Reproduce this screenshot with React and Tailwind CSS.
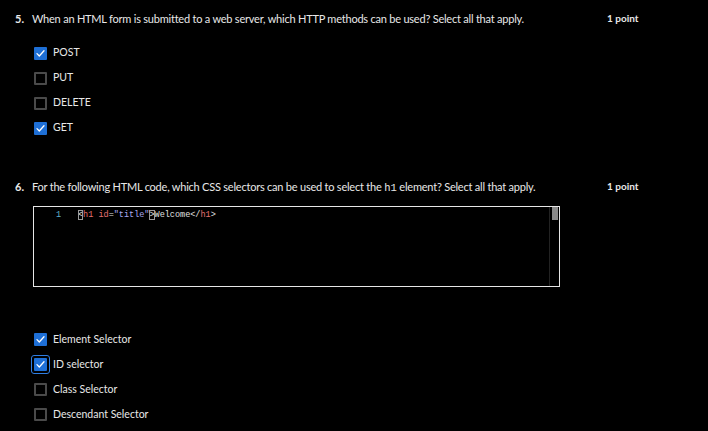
import React from "react";

const Check = ({ checked, focus }) => (
  <span className={`flex items-center justify-center w-[19px] h-[19px] rounded-[3px] ${focus ? "border border-[#2f7de1]" : "border border-transparent"}`}>
    {checked ? (
      <span className="flex items-center justify-center w-[13px] h-[13px] rounded-[1px] bg-[#1e6fd6]">
        <svg width="11" height="11" viewBox="0 0 11 11" fill="none">
          <path d="M2 5.6 L4.3 8 L9 2.8" stroke="#ffffff" strokeWidth="1.3" strokeLinecap="round" strokeLinejoin="round" />
        </svg>
      </span>
    ) : (
      <span className="block w-[13px] h-[13px] rounded-[1px] border-2 border-[#4a4a4a]" />
    )}
  </span>
);

const Option = ({ label, checked, focus }) => (
  <div className="flex items-center h-[25px]">
    <div className="ml-[31px] w-[19px] flex items-center justify-center">
      <Check checked={checked} focus={focus} />
    </div>
    <span className="ml-[3px] text-[10.5px] text-[#e8e8e8]">{label}</span>
  </div>
);

const Question = ({ num, children }) => (
  <div className="flex items-start">
    <span className="w-[17px] pl-[15px] box-content text-[11px] font-bold text-[#e8e8e8]">{num}</span>
    <div className="flex-1 text-[11px] tracking-[-0.22px] text-[#e8e8e8]">{children}</div>
    <span className="w-[101px] text-[10px] font-bold text-[#e8e8e8]">1 point</span>
  </div>
);

export default function App() {
  return (
    <div className="w-[708px] h-[431px] bg-black overflow-hidden font-['Lato',sans-serif]">
      <div className="pt-[11px]">
        <Question num="5.">When an HTML form is submitted to a web server, which HTTP methods can be used? Select all that apply.</Question>
        <div className="mt-[13px]">
          <Option label="POST" checked />
          <Option label="PUT" />
          <Option label="DELETE" />
          <Option label="GET" checked />
        </div>
      </div>
      <div className="mt-[38px]">
        <Question num="6.">
          For the following HTML code, which CSS selectors can be used to select the{" "}
          <span className="font-['Liberation_Mono',monospace] text-[10.5px] tracking-normal">h1</span> element? Select all that apply.
        </Question>
        <div className="ml-[33px] mt-[10px] w-[527px] h-[81px] border border-[#e6e6e6] flex">
          <div className="flex-1 flex items-start pt-[2px] font-['Liberation_Mono',monospace] text-[8.5px] leading-[12px]">
            <span className="w-[42px] text-right pr-[15px] text-[#5fb0d0]">1</span>
            <span className="ml-[2px] text-[#e0e0e0]">
              <span className="outline outline-1 outline-[#9a9a9a] -outline-offset-1">&lt;</span>
              <span className="text-[#e47171]">h1</span>{" "}
              <span className="text-[#e47171]">id</span>=
              <span className="text-[#a8a8f0]">"title"</span>
              <span className="outline outline-1 outline-[#9a9a9a] -outline-offset-1">&gt;</span>
              Welcome&lt;/<span className="text-[#e47171]">h1</span>&gt;
            </span>
          </div>
          <div className="w-[10px] border-l border-[#222] flex justify-center">
            <div className="w-[6px] h-[13px] bg-[#8a8a8a]" />
          </div>
        </div>
        <div className="mt-[40px]">
          <Option label="Element Selector" checked />
          <Option label="ID selector" checked focus />
          <Option label="Class Selector" />
          <Option label="Descendant Selector" />
        </div>
      </div>
    </div>
  );
}
